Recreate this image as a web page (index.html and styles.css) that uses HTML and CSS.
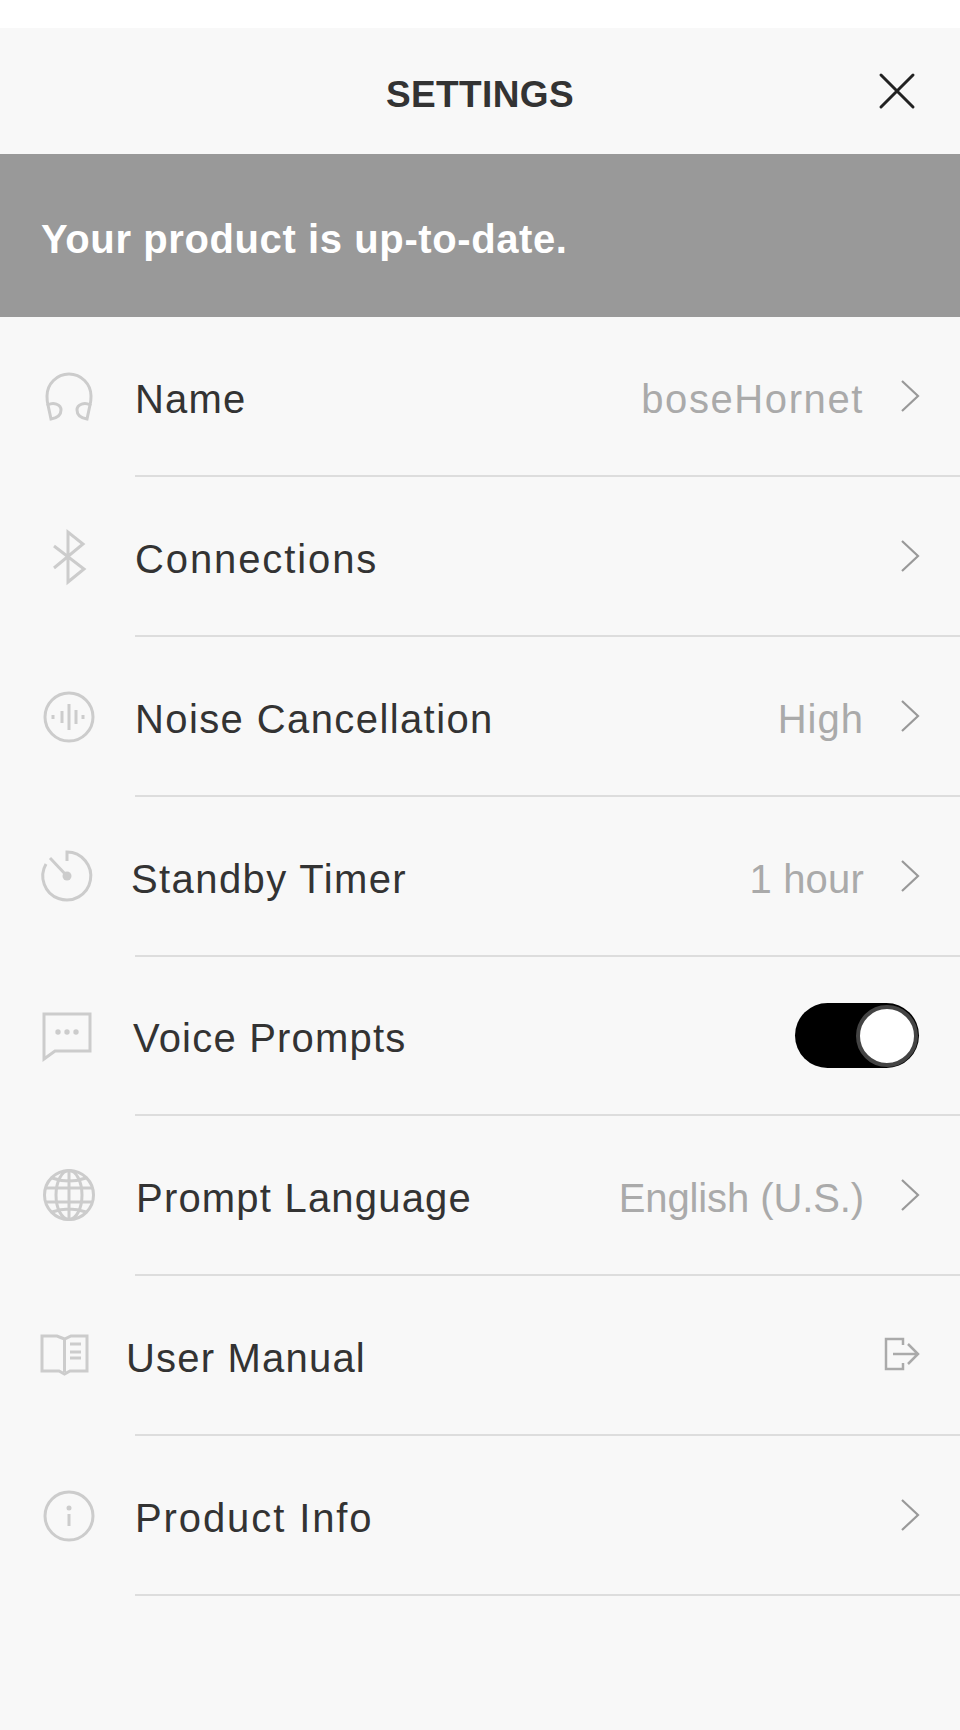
FILE: index.html
```html
<!DOCTYPE html>
<html lang="en">
<head>
<meta charset="utf-8">
<title>Settings</title>
<link rel="stylesheet" href="styles.css">
</head>
<body>
<div class="page">
    <header class="top">
        <h1 class="title">SETTINGS</h1>
        <svg class="close" width="38" height="38" viewBox="0 0 38 38"><path d="M3 3L35 35M35 3L3 35"/></svg>
    </header>
    <div class="banner">Your product is up-to-date.</div>

    <div class="row">
        <svg class="icon" viewBox="0 0 64 64"><path d="M11 40C10 37 10 34 10 31A22 22 0 0 1 54 31C54 34 54 37 53 40"/><path d="M11 40C16 37 24 39 24 45C24 50 20 53 14 54Z"/><path d="M53 40C48 37 40 39 40 45C40 50 44 53 50 54Z"/></svg>
        <div class="body">
            <span class="label snug">Name</span>
            <span class="value wide">boseHornet</span>
            <svg class="chev" viewBox="0 0 20 34"><path d="M2 2L18 17L2 32"/></svg>
        </div>
    </div>

    <div class="row">
        <svg class="icon" viewBox="0 0 64 64"><path d="M17 21L47 44L31 57V7L46 19L17 43"/></svg>
        <div class="body">
            <span class="label wide">Connections</span>
            <svg class="chev" viewBox="0 0 20 34"><path d="M2 2L18 17L2 32"/></svg>
        </div>
    </div>

    <div class="row">
        <svg class="icon" viewBox="0 0 64 64"><circle cx="32" cy="32" r="24"/><path d="M16 30V34M25 26V38M32 19V45M39 25V39M46 30V34"/></svg>
        <div class="body">
            <span class="label">Noise Cancellation</span>
            <span class="value">High</span>
            <svg class="chev" viewBox="0 0 20 34"><path d="M2 2L18 17L2 32"/></svg>
        </div>
    </div>

    <div class="row">
        <svg class="icon" viewBox="0 0 64 64"><path d="M30 16V7A24 24 0 1 1 9 19"/><path d="M13 13L30 31"/><circle class="solid" cx="30" cy="31" r="4.500"/></svg>
        <div class="body">
            <span class="label label-timer">Standby Timer</span>
            <span class="value tight">1 hour</span>
            <svg class="chev" viewBox="0 0 20 34"><path d="M2 2L18 17L2 32"/></svg>
        </div>
    </div>

    <div class="row row-short">
        <svg class="icon" viewBox="0 0 64 64"><path d="M7 9H53V46H18L7 54Z"/><circle class="solid" cx="21" cy="27" r="2.700"/><circle class="solid" cx="30" cy="27" r="2.700"/><circle class="solid" cx="39" cy="27" r="2.700"/></svg>
        <div class="body">
            <span class="label label-voice snug">Voice Prompts</span>
            <div class="toggle"><span class="knob"></span></div>
        </div>
    </div>

    <div class="row">
        <svg class="icon" viewBox="0 0 64 64"><circle cx="32" cy="31" r="24.500"/><ellipse cx="32" cy="31" rx="13" ry="24.500"/><path d="M32 7V55M15 14Q32 20 49 14M9 24H55M9 38H55M15 48Q32 42 49 48"/></svg>
        <div class="body">
            <span class="label label-lang snug">Prompt Language</span>
            <span class="value tighter">English (U.S.)</span>
            <svg class="chev" viewBox="0 0 20 34"><path d="M2 2L18 17L2 32"/></svg>
        </div>
    </div>

    <div class="row">
        <svg class="icon" viewBox="0 0 64 64"><path d="M5 12H20L27.500 15L34 12H50V47H33L27.500 50L22 47H5Z"/><path d="M27.500 15V48M33 20H44M33 28H44M33 34H44"/></svg>
        <div class="body">
            <span class="label label-manual snug">User Manual</span>
            <svg class="exit" viewBox="0 0 36 34"><path d="M19 8V2H2V32H19V26M9 17H33M24 7L34 17L24 27"/></svg>
        </div>
    </div>

    <div class="row">
        <svg class="icon" viewBox="0 0 64 64"><circle cx="32" cy="32" r="24"/><circle class="solid" cx="32" cy="24" r="2.500"/><path d="M32 30V42"/></svg>
        <div class="body">
            <span class="label wide">Product Info</span>
            <svg class="chev" viewBox="0 0 20 34"><path d="M2 2L18 17L2 32"/></svg>
        </div>
    </div>
</div>
</body>
</html>
```
FILE: styles.css
```css
html, body {
    margin: 0;
    background: #fff;
}
body {
    font-family: "Liberation Sans", Arial, sans-serif;
    color: #333;
}
.page {
    margin-top: 28px;
    min-height: 1702px;
    background: #f8f8f8;
}
.top {
    display: grid;
    grid-template-columns: 1fr auto 1fr;
    align-items: center;
    height: 126px;
}
.title {
    grid-column: 2;
    margin: 0;
    padding-top: 7px;
    font-size: 37px;
    font-weight: bold;
    letter-spacing: .4px;
}
.close {
    grid-column: 3;
    justify-self: end;
    margin: 0 44px 0 0;
    fill: none;
    stroke: #222;
    stroke-width: 3;
    stroke-linecap: round;
}
.banner {
    display: flex;
    align-items: center;
    height: 163px;
    padding: 8px 0 0 41px;
    box-sizing: border-box;
    background: #999;
    color: #fff;
    font-size: 40px;
    font-weight: bold;
    letter-spacing: .6px;
}
.row {
    display: flex;
    align-items: center;
    height: 160px;
}
.row-short {
    height: 159px;
}
.icon {
    flex: none;
    width: 64px;
    height: 64px;
    margin: 0 34px 0 37px;
    fill: none;
    stroke: #ccc;
    stroke-width: 3;
}
.icon .solid {
    fill: #ccc;
    stroke: none;
}
.body {
    flex: 1;
    display: flex;
    align-items: center;
    align-self: stretch;
    padding-right: 40px;
    border-bottom: 2px solid #ddd;
    font-size: 40px;
}
.label {
    flex: 1;
    padding-top: 7px;
    letter-spacing: 1.4px;
}
.row-short .label {
    padding-top: 5px;
}
.label.wide {
    letter-spacing: 1.9px;
}
.label.snug {
    letter-spacing: 1.2px;
}
.label-timer {
    margin-left: -4px;
}
.label-voice {
    margin-left: -2px;
}
.label-lang {
    margin-left: 1px;
}
.label-manual {
    margin-left: -9px;
}
.value {
    padding-top: 7px;
    color: #aaa;
    letter-spacing: 1px;
}
.value.wide {
    letter-spacing: 1.6px;
}
.value.tight {
    letter-spacing: .2px;
}
.value.tighter {
    letter-spacing: -.1px;
}
.chev {
    flex: none;
    width: 20px;
    height: 34px;
    margin-left: 36px;
    fill: none;
    stroke: #999;
    stroke-width: 2.200;
}
.exit {
    flex: none;
    width: 36px;
    height: 34px;
    margin-bottom: 2px;
    fill: none;
    stroke: #aaa;
    stroke-width: 2.500;
}
.toggle {
    display: flex;
    justify-content: flex-end;
    align-items: center;
    width: 124px;
    height: 65px;
    margin-right: 1px;
    padding-right: 1px;
    box-sizing: border-box;
    border-radius: 33px;
    background: #000;
}
.knob {
    width: 54px;
    height: 54px;
    border: 4px solid #444;
    border-radius: 50%;
    background: #fff;
}
```
